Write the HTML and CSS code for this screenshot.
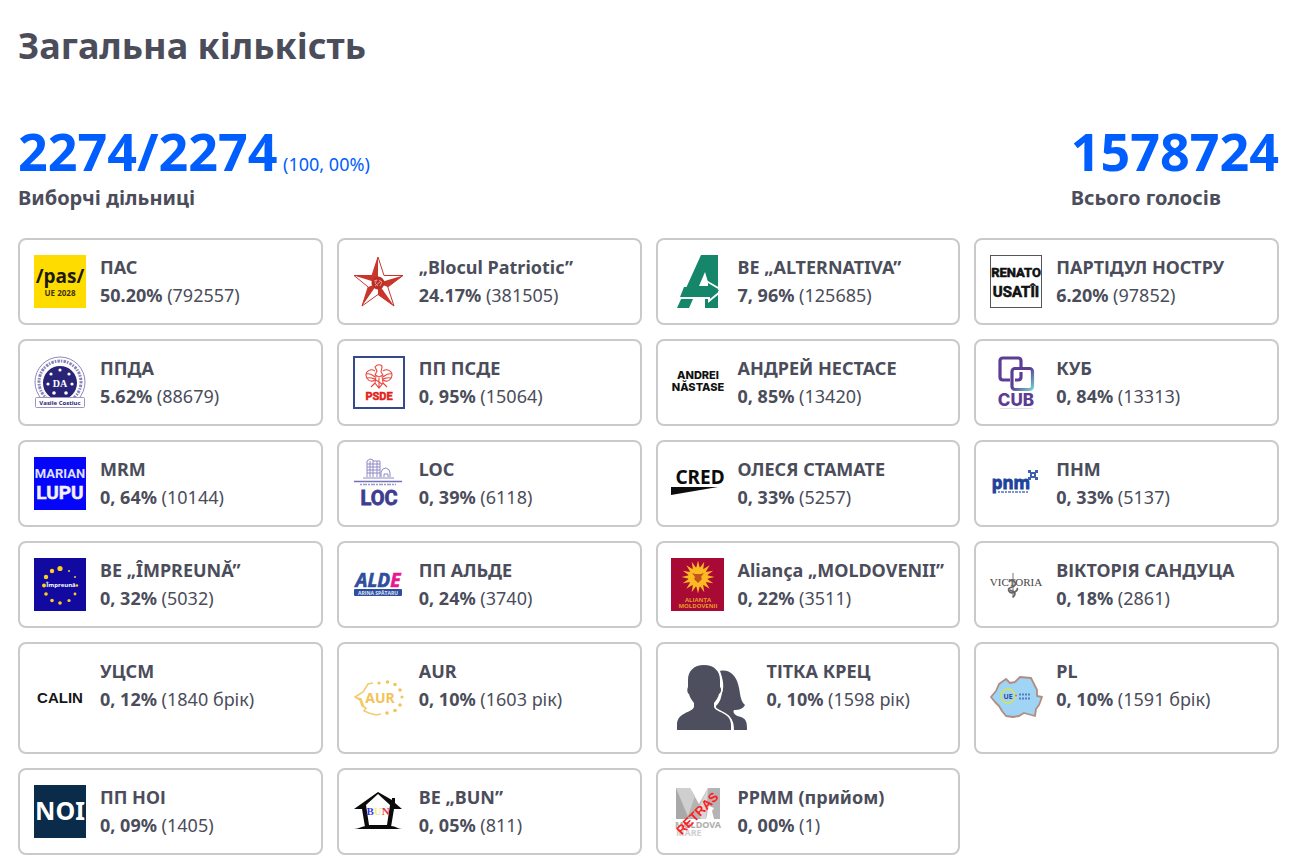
FILE: index.html
```html
<!DOCTYPE html>
<html lang="uk">
<head>
<meta charset="utf-8">
<meta name="viewport" content="width=device-width, initial-scale=1">
<title>Загальна кількість</title>
<link rel="stylesheet" href="styles.css">
</head>
<body>
<main class="page">
  <h1 class="title">Загальна кількість</h1>

  <section class="totals">
    <div class="total">
      <p class="total-value">2274/2274 <span class="total-note">(100, 00%)</span></p>
      <p class="total-label">Виборчі дільниці</p>
    </div>
    <div class="total">
      <p class="total-value">1578724</p>
      <p class="total-label">Всього голосів</p>
    </div>
  </section>

  <ul class="parties">
    <li class="party">
      <svg class="logo" viewBox="0 0 52 53" aria-hidden="true">
        <rect width="52" height="53" fill="#ffdc00"/>
        <text class="t-open" x="26" y="28" font-size="19" text-anchor="middle" fill="#1c1a10">/pas/</text>
        <text class="t-open" x="26" y="41" font-size="8" text-anchor="middle" fill="#3c3510">UE 2028</text>
      </svg>
      <div class="info"><h2 class="name">ПАС</h2><p class="votes"><b>50.20%</b> (792557)</p></div>
    </li>
    <li class="party">
      <svg class="logo" viewBox="0 0 52 53" aria-hidden="true">
        <path d="M25 2l6 18.500h19L34.800 32 41 51 25 39.500 9 51l6.200-19L1 20.500h18z" fill="#fff" stroke="#c9352b" stroke-linejoin="round"/>
        <path d="M25 2v26l-6-7.500zM1 20.500h18l6 7.500zM50 20.500L34.800 32 25 28zM41 51L25 39.500V28zM9 51l6.200-19L25 28z" fill="#c9352b"/>
        <circle cx="25" cy="28" r="6.500" fill="#b92f27"/>
        <path d="M21 26l3-1-2 3 3 3M26 25l3 2-2 4M22 31l6-5" fill="none" stroke="#e7938a"/>
      </svg>
      <div class="info"><h2 class="name">„Blocul Patriotic”</h2><p class="votes"><b>24.17%</b> (381505)</p></div>
    </li>
    <li class="party">
      <svg class="logo" viewBox="0 0 52 53" aria-hidden="true">
        <path d="M29 0h17v53H33v-9H21l-4 9H5z" fill="#16866a"/>
        <path d="M33 17l-6 14h9v-4z" fill="#fff"/>
        <path d="M34 26l14 8M7 43h30v3l11-9" fill="none" stroke="#fff" stroke-width="2"/>
        <path d="M12 32h24v-4l11 7.500L38 42H8z" fill="#16866a"/>
      </svg>
      <div class="info"><h2 class="name">BE „ALTERNATIVA”</h2><p class="votes"><b>7, 96%</b> (125685)</p></div>
    </li>
    <li class="party">
      <svg class="logo" viewBox="0 0 52 53" aria-hidden="true">
        <rect x=".5" y=".5" width="51" height="52" fill="#fff" stroke="#555"/>
        <text class="t-narrow" x="26" y="22" font-size="13" text-anchor="middle" fill="#111" stroke="#111" stroke-width=".6">RENATO</text>
        <text class="t-narrow" x="26" y="42" font-size="15" text-anchor="middle" fill="#111" stroke="#111" stroke-width=".6">USATÎI</text>
      </svg>
      <div class="info"><h2 class="name">ПАРТІДУЛ НОСТРУ</h2><p class="votes"><b>6.20%</b> (97852)</p></div>
    </li>

    <li class="party">
      <svg class="logo" viewBox="0 0 52 53" aria-hidden="true">
        <circle cx="26" cy="26" r="25" fill="#fff" stroke="#8d88bb"/>
        <circle cx="26" cy="26" r="21" fill="none" stroke="#8a84b8" stroke-width="3" stroke-dasharray="1.500 1.200 2.500 1"/>
        <circle cx="26" cy="27" r="17" fill="#2a2478"/>
        <g fill="#fff"><circle cx="26" cy="14" r="1.600"/><circle cx="17" cy="18" r="1.600"/><circle cx="35" cy="18" r="1.600"/><circle cx="14" cy="28" r="1.600"/><circle cx="38" cy="28" r="1.600"/><circle cx="20" cy="37" r="1.800"/><circle cx="32" cy="37" r="1.800"/></g>
        <text class="t-serif" x="26" y="31" font-size="10" text-anchor="middle" fill="#fff">DA</text>
        <rect x="1.500" y="41.500" width="49" height="10" rx="1" fill="#fff" stroke="#9a95c3"/>
        <text class="t-open" x="26" y="49" font-size="6" text-anchor="middle" fill="#2a2478">Vasile Costiuc</text>
      </svg>
      <div class="info"><h2 class="name">ППДА</h2><p class="votes"><b>5.62%</b> (88679)</p></div>
    </li>
    <li class="party">
      <svg class="logo" viewBox="0 0 52 53" aria-hidden="true">
        <rect x="1" y="1" width="50" height="51" fill="#fff" stroke="#344a8c" stroke-width="2"/>
        <g fill="none" stroke="#e8473f" stroke-width="1.100">
          <path d="M22 11c2-3 7-3 7 0l-1 5 2 3-4 2-4-2 2-4z"/>
          <path d="M22 15c-4-3-9 0-9 4s4 8 9 5M14 18c3-1 5 1 8 3M14 22c3-1 5 0 8 1"/>
          <path d="M30 15c4-3 9 0 9 4s-4 8-9 5M38 18c-3-1-5 1-8 3M38 22c-3-1-5 0-8 1"/>
          <path d="M23 20l-1 7 4 5 4-5-1-7M22 27l-4 4M30 27l4 4M26 22v9M23 24l6 4"/>
        </g>
        <text class="t-narrow" x="26" y="44" font-size="11" text-anchor="middle" fill="#e3201b" stroke="#e3201b" stroke-width=".5">PSDE</text>
      </svg>
      <div class="info"><h2 class="name">ПП ПСДЕ</h2><p class="votes"><b>0, 95%</b> (15064)</p></div>
    </li>
    <li class="party">
      <svg class="logo" viewBox="0 0 52 53" aria-hidden="true">
        <text class="t-inter" x="26" y="23" font-size="11" text-anchor="middle" fill="#111">ANDREI</text>
        <text class="t-inter" x="26" y="35" font-size="11" text-anchor="middle" fill="#111">NĂSTASE</text>
      </svg>
      <div class="info"><h2 class="name">АНДРЕЙ НЕСТАСЕ</h2><p class="votes"><b>0, 85%</b> (13420)</p></div>
    </li>
    <li class="party">
      <svg class="logo" viewBox="0 0 52 53" aria-hidden="true">
        <defs><linearGradient id="cub" x1="0" y1="0" x2="1" y2="1"><stop offset=".45" stop-color="#5c3d93"/><stop offset="1" stop-color="#72cfd0"/></linearGradient></defs>
        <g fill="none" stroke-width="3.200">
          <path d="M20 24h-7q-3 0-3-3V5q0-3 3-3h15q3 0 3 3v6M31 16v5q0 3-3 3h-3" stroke="#5c3d93"/>
          <rect x="22" y="12.500" width="20.500" height="21" rx="3" stroke="url(#cub)"/>
        </g>
        <text class="t-inter" x="26" y="50" font-size="17" text-anchor="middle" fill="#5c3d93">CUB</text>
        <path d="M10 52.500h33" stroke="#e5e0ee"/>
      </svg>
      <div class="info"><h2 class="name">КУБ</h2><p class="votes"><b>0, 84%</b> (13313)</p></div>
    </li>

    <li class="party">
      <svg class="logo" viewBox="0 0 52 53" aria-hidden="true">
        <rect width="52" height="53" fill="#0505fa"/>
        <text class="t-narrow" x="26" y="21" font-size="13" text-anchor="middle" fill="#dfe0ff">MARIAN</text>
        <text class="t-narrow" x="26" y="42" font-size="19" text-anchor="middle" fill="#f1f1ff" stroke="#f1f1ff" stroke-width=".5">LUPU</text>
      </svg>
      <div class="info"><h2 class="name">MRM</h2><p class="votes"><b>0, 64%</b> (10144)</p></div>
    </li>
    <li class="party">
      <svg class="logo" viewBox="0 0 52 53" aria-hidden="true">
        <g fill="none" stroke="#8e8bc4">
          <path d="M14 20V4l3-2 3 1v17M20 4h7v16M14 7h13M14 10h13M14 13h13M14 16h13M17 4v16M24 4v16" />
          <path d="M28 20v-5q1-4 5-4 4 1 4 5v4M31 20v-3h4v3M10 21h31"/>
        </g>
        <path d="M1 24.500h48" stroke="#7672b4" stroke-width="1.500"/>
        <path d="M7 27.500h36" stroke="#9d9aca" stroke-width="1.500" stroke-dasharray="2 1 4 1"/>
        <text class="t-narrow" x="26" y="48" font-size="20" text-anchor="middle" fill="#3e3d8e" stroke="#3e3d8e" stroke-width=".8">LOC</text>
      </svg>
      <div class="info"><h2 class="name">LOC</h2><p class="votes"><b>0, 39%</b> (6118)</p></div>
    </li>
    <li class="party">
      <svg class="logo" viewBox="0 0 52 53" aria-hidden="true">
        <text class="t-noto" x="28" y="27" font-size="19" text-anchor="middle" fill="#0c0c0c">CRED</text>
        <path d="M-1 30h47L-1 38z" fill="#0c0c0c"/>
      </svg>
      <div class="info"><h2 class="name">ОЛЕСЯ СТАМАТЕ</h2><p class="votes"><b>0, 33%</b> (5257)</p></div>
    </li>
    <li class="party">
      <svg class="logo" viewBox="0 0 52 53" aria-hidden="true">
        <text class="t-noto" x="21" y="32" font-size="17" text-anchor="middle" fill="#1c449c" stroke="#1c449c" stroke-width=".8">pnm</text>
        <path d="M8 35h31" stroke="#7e94c6" stroke-width="2" stroke-dasharray="2 1 3 1"/>
        <path d="M38 13h3v3h-3zM45 13h3v3h-3zM38 20h3v3h-3zM45 20h3v3h-3zM41 15h4v2h-4zM41 19h4v2h-4zM40 16h2v4h-2zM44 16h2v4h-2z" fill="#3d61ac"/>
      </svg>
      <div class="info"><h2 class="name">ПНМ</h2><p class="votes"><b>0, 33%</b> (5137)</p></div>
    </li>

    <li class="party">
      <svg class="logo" viewBox="0 0 52 53" aria-hidden="true">
        <rect width="52" height="53" fill="#120aa0"/>
        <g fill="#ffcf1a"><circle cx="26" cy="10.500" r="2.600"/><circle cx="18" cy="13" r="2.200"/><circle cx="12" cy="19" r="2.200"/><circle cx="10" cy="27.500" r="2"/><circle cx="12" cy="36" r="1.800"/><circle cx="18" cy="42.500" r="1.800"/><circle cx="26" cy="45" r="1.800"/><circle cx="35" cy="42.500" r="1.600"/><circle cx="41" cy="36" r="1.400"/><circle cx="43" cy="27.500" r="1.200"/><circle cx="41" cy="19" r="1"/><circle cx="35" cy="13" r="1"/></g>
        <text class="t-open" x="27" y="29" font-size="6" text-anchor="middle" fill="#fff">Împreună</text>
      </svg>
      <div class="info"><h2 class="name">BE „ÎMPREUNĂ”</h2><p class="votes"><b>0, 32%</b> (5032)</p></div>
    </li>
    <li class="party">
      <svg class="logo" viewBox="0 0 52 53" aria-hidden="true">
        <text class="t-open" x="25" y="29" font-size="19" font-style="italic" text-anchor="middle" fill="#2f4f9e" stroke="#2f4f9e" stroke-width=".6">ALD<tspan fill="#ec1590" stroke="#ec1590">E</tspan></text>
        <rect x="1" y="31" width="48" height="7" rx="1" fill="#2f4f9e"/>
        <text class="t-open" x="25" y="37" font-size="5" text-anchor="middle" fill="#dfe5f4">ARINA SPĂTARU</text>
      </svg>
      <div class="info"><h2 class="name">ПП АЛЬДЕ</h2><p class="votes"><b>0, 24%</b> (3740)</p></div>
    </li>
    <li class="party">
      <svg class="logo" viewBox="0 0 52 53" aria-hidden="true">
        <rect x="-1" width="53" height="53" fill="#a80a35"/>
        <g fill="#fbb924">
          <circle cx="26" cy="19" r="10"/>
          <path id="ray" d="M24.200 10L26 2.500l1.800 7.500zM24.200 28l1.800 7.500 1.800-7.500zM17 17.200L9.500 19l7.500 1.800zM35 17.200l7.500 1.800-7.500 1.800z"/>
          <use href="#ray" transform="rotate(22.500 26 19)"/><use href="#ray" transform="rotate(45 26 19)"/><use href="#ray" transform="rotate(67.500 26 19)"/>
        </g>
        <path d="M20 15l3 1h6l3-1-3 4 1 2-4 4-4-4 1-2z" fill="#c0561d"/>
        <text class="t-open" x="26" y="44" font-size="6" text-anchor="middle" fill="#e59a2a">ALIANȚA</text>
        <text class="t-open" x="26" y="50" font-size="6" text-anchor="middle" fill="#e59a2a">MOLDOVENII</text>
      </svg>
      <div class="info"><h2 class="name">Aliança „MOLDOVENII”</h2><p class="votes"><b>0, 22%</b> (3511)</p></div>
    </li>
    <li class="party">
      <svg class="logo" viewBox="0 0 52 53" aria-hidden="true">
        <text font-family="Liberation Serif, serif" x="26" y="28" font-size="11" text-anchor="middle" fill="#444">VICTORIA</text>
        <path d="M23 15v25" stroke="#777"/>
        <path d="M19 24c2-4 8 0 6 3s-8 2-6 6 10 0 8-3M20 32c4 1 7 3 3 7" fill="none" stroke="#666" stroke-width="1.800"/>
      </svg>
      <div class="info"><h2 class="name">ВІКТОРІЯ САНДУЦА</h2><p class="votes"><b>0, 18%</b> (2861)</p></div>
    </li>

    <li class="party">
      <svg class="logo" viewBox="0 0 52 53" aria-hidden="true">
        <text class="t-arial" x="26" y="32" font-size="15" text-anchor="middle" fill="#161616">CALIN</text>
      </svg>
      <div class="info"><h2 class="name">УЦСМ</h2><p class="votes"><b>0, 12%</b> (1840 брік)</p></div>
    </li>
    <li class="party">
      <svg class="logo" viewBox="0 0 52 53" aria-hidden="true">
        <path d="M20 12l-5 1-5 8-8 5 5 3 2 6 4 2-2 3 5 2 7 2 5-1M4 27l4 1 3 8" fill="none" stroke="#f3cb6c" stroke-width="1.500"/>
        <g fill="#f3c35a"><circle cx="26" cy="12" r="1.600"/><circle cx="34.500" cy="11" r="1.800"/><circle cx="42" cy="13.500" r="1.800"/><circle cx="47" cy="19" r="1.800"/><circle cx="49" cy="26" r="1.600"/><circle cx="47" cy="34" r="1.800"/><circle cx="42" cy="39.500" r="1.800"/><circle cx="34" cy="42" r="1.800"/></g>
        <text class="t-noto" x="27" y="32" font-size="14" text-anchor="middle" fill="#f3c35a">AUR</text>
      </svg>
      <div class="info"><h2 class="name">AUR</h2><p class="votes"><b>0, 10%</b> (1603 рік)</p></div>
    </li>
    <li class="party">
      <svg class="logo logo-large" viewBox="0 0 81 81" aria-hidden="true">
        <g fill="#4d4f5e">
          <path d="M48 14c8-2 14 3 17 10 4 10 2 19 8 24-2 4-6 5-11 5-2 3 2 6 7 7 6 2 6 7 6 13H62c0-8-2-13-9-16-6-3-10-4-9-8 5-5 5-9 6-13 3-8 0-16-2-22z"/>
          <path d="M32 8c10 0 16 6 16 15v7c2 2 1 6-1 7-1 4-3 6-5 9v4c2 6 17 5 17 18v5H5v-5c0-13 15-12 17-18v-4c-2-3-4-5-5-9-2-1-2-5-1-7v-7c0-9 6-15 16-15z" stroke="#fff" stroke-width="3" paint-order="stroke"/>
        </g>
      </svg>
      <div class="info"><h2 class="name">ТІТКА КРЕЦ</h2><p class="votes"><b>0, 10%</b> (1598 рік)</p></div>
    </li>
    <li class="party">
      <svg class="logo" viewBox="0 0 52 53" aria-hidden="true">
        <path d="M1 26l5-6 3-7 7-5 4 4 5-1 5-5 11 1 3 6 3 6v6l5 1-3 8-3 4-1 7-11-3-5 3-6 1-7-1-4-5-3-5-4-4z" fill="#a0d4f4" stroke="#b08d80" stroke-width="1.800" stroke-linejoin="round"/>
        <circle cx="18" cy="25" r="7" fill="none" stroke="#cde06f" stroke-width="1.800"/>
        <text class="t-open" x="18" y="28" font-size="7" text-anchor="middle" fill="#28489f">UE</text>
        <path d="M25 24.500h2M26 23.500v2" stroke="#d46a7c"/>
        <path d="M29 23.500h12M29 27.500h11" stroke="#5680bd" stroke-width="2" stroke-dasharray="2 1"/>
      </svg>
      <div class="info"><h2 class="name">PL</h2><p class="votes"><b>0, 10%</b> (1591 брік)</p></div>
    </li>

    <li class="party">
      <svg class="logo" viewBox="0 0 52 53" aria-hidden="true">
        <rect width="52" height="53" fill="#0a2b49"/>
        <text class="t-noto" x="26" y="35" font-size="25" text-anchor="middle" fill="#fff">NOI</text>
      </svg>
      <div class="info"><h2 class="name">ПП НОІ</h2><p class="votes"><b>0, 09%</b> (1405)</p></div>
    </li>
    <li class="party">
      <svg class="logo" viewBox="0 0 52 53" aria-hidden="true">
        <path d="M25 7L1 24h8l3 18h26l3-18h8l-7-6v-5h-3v2zM25 9l12 11-3 20H16l-3-20z" fill="#0b0b0b" fill-rule="evenodd"/>
        <path d="M1 44c5 0 8-3 12-3h25c5 0 6 3 11 3z" fill="#0b0b0b"/>
        <text class="t-serif" x="25" y="30" font-size="11" text-anchor="middle"><tspan fill="#3b38e0">B</tspan><tspan fill="#f4ea8a">U</tspan><tspan fill="#ea3440">N</tspan></text>
      </svg>
      <div class="info"><h2 class="name">BE „BUN”</h2><p class="votes"><b>0, 05%</b> (811)</p></div>
    </li>
    <li class="party">
      <svg class="logo" viewBox="0 0 52 53" aria-hidden="true">
        <path d="M4 3h14l9 16L36 3h12v31H4z" fill="#b4b4b4"/>
        <path d="M4 3h14l5 8-8 23H4z" fill="#cfcfcf"/><path d="M4 3l13 31H4z" fill="#a9a9a9"/>
        <path d="M36 3L25 26l4 8h5z" fill="#d7d7d7"/>
        <path d="M34 34c2-6 1-9 3-13l5 2-2 3 2 8z" fill="#fff"/>
        <text class="t-noto" x="26" y="43" font-size="9" text-anchor="middle" fill="#adadad">MOLDOVA</text>
        <text class="t-noto" x="4" y="51" font-size="9" fill="#cfcfcf">MARE</text>
        <text class="t-arial" x="25" y="33" font-size="13" text-anchor="middle" fill="#ff2020" transform="rotate(-45 25 28)">RETRAS</text>
      </svg>
      <div class="info"><h2 class="name">PPMM (прийом)</h2><p class="votes"><b>0, 00%</b> (1)</p></div>
    </li>
  </ul>
</main>
</body>
</html>
```
FILE: styles.css
```css
* { box-sizing: border-box; }

body {
  margin: 0;
  background: #fff;
  color: #4b4d5b;
  font-family: "Noto Sans", "Open Sans", sans-serif;
}

h1, h2, p, ul { margin: 0; padding: 0; }

.page { padding: 20px 12px 12px 18px; }

.title {
  font-size: 36px;
  line-height: 52px;
  font-weight: 700;
}

.totals {
  display: flex;
  justify-content: space-between;
  margin-top: 48px;
}

.total-value {
  font-size: 52px;
  line-height: 62px;
  font-weight: 700;
  color: #005eff;
}

.total-note {
  margin-left: -8px;
  font-size: 18px;
  line-height: 18px;
  font-weight: 400;
}

.total-label {
  margin-top: 2px;
  font-size: 20px;
  line-height: 28px;
  font-weight: 700;
}

.parties {
  display: grid;
  grid-template-columns: repeat(4, minmax(0, 1fr));
  gap: 14px;
  margin-top: 26px;
  list-style: none;
}

.party {
  display: flex;
  align-items: center;
  gap: 14px;
  padding: 13px 14px 14px;
  border: 2px solid #cacaca;
  border-radius: 8px;
}

.logo {
  flex: none;
  width: 52px;
  height: 53px;
  overflow: visible;
}

.logo-large { width: 81px; height: 81px; }

.info {
  align-self: flex-start;
  min-width: 0;
  white-space: nowrap;
}

.name, .votes {
  font-size: 18px;
  line-height: 28px;
}

.name, .votes b { font-weight: 700; }

.t-open { font-family: "Open Sans", sans-serif; font-weight: 700; }
.t-noto { font-family: "Noto Sans", sans-serif; font-weight: 700; }
.t-inter { font-family: Inter, sans-serif; font-weight: 800; }
.t-arial { font-family: "Liberation Sans", sans-serif; font-weight: 700; }
.t-narrow { font-family: "Liberation Sans Narrow", Roboto, sans-serif; font-weight: 700; }
.t-serif { font-family: "Liberation Serif", serif; font-weight: 700; }
```
